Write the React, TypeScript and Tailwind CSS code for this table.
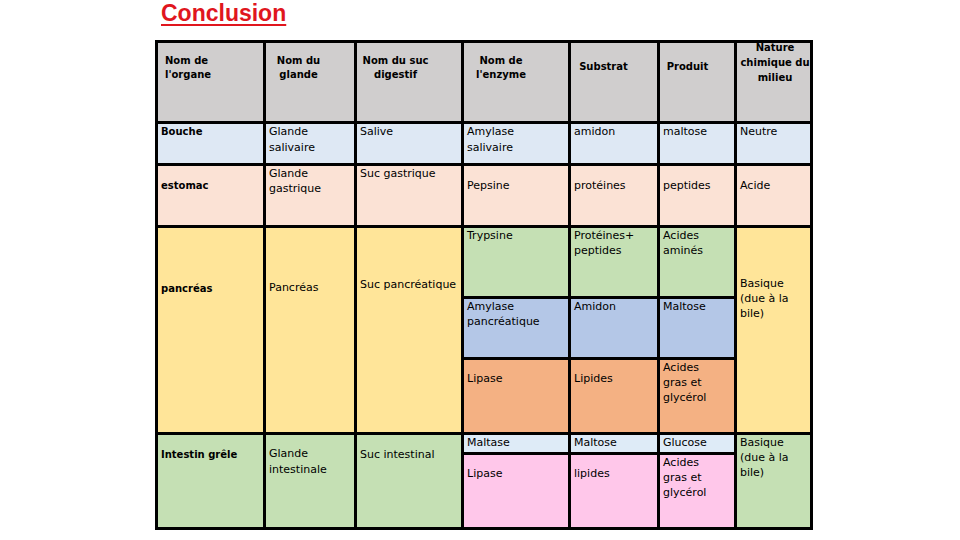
import React from "react";

const C: React.FC<{ bg: string; className?: string; children?: React.ReactNode }> = ({ bg, className = "", children }) => (
  <div className={`${bg} ${className}`}>{children}</div>
);

export default function App() {
  const H = "bg-[#d0cece] font-bold text-[10px] leading-[14px] text-black";
  const B = "text-[11px] leading-[15px] text-black pl-[3px]";
  const O = "font-bold text-[10px] leading-[15px] text-black pl-[3px]";
  return (
    <div className="w-[960px] h-[540px] bg-white overflow-hidden">
      <div className="pl-[161px]">
        <div className="font-['Liberation_Sans',Arial,sans-serif] font-bold text-[23px] leading-[26px] text-[#e0161e] underline decoration-2 underline-offset-[3px]">
          Conclusion
        </div>
      </div>
      <div className="ml-[155px] mt-[14px] w-fit font-['DejaVu_Sans',sans-serif]">
        <div className="grid grid-cols-[105px_88px_104px_104px_86px_74px_73px] grid-rows-[78px_39px_59px_68px_58px_72px_17px_72px] gap-[3px] p-[3px] bg-black">
          {/* header */}
          <C bg="" className={`${H} pl-[7px] pt-[11px]`}>Nom de<br />l'organe</C>
          <C bg="" className={`${H} text-center pr-[23px] pt-[11px]`}>Nom du<br />glande</C>
          <C bg="" className={`${H} text-center pr-[27px] pt-[11px] whitespace-nowrap`}>Nom du suc<br />digestif</C>
          <C bg="" className={`${H} text-center pr-[30px] pt-[11px]`}>Nom de<br />l'enzyme</C>
          <C bg="" className={`${H} text-center pr-[21px] pt-[17px]`}>Substrat</C>
          <C bg="" className={`${H} text-center pr-[19px] pt-[17px]`}>Produit</C>
          <C bg="" className={`${H} text-center pl-[3px] whitespace-nowrap`}>
            <div className="-mt-[3px] leading-[15px]">Nature<br />chimique du<br />milieu</div>
          </C>

          {/* Bouche */}
          <C bg="bg-[#dee8f4]" className={O}>Bouche</C>
          <C bg="bg-[#dee8f4]" className={`${B} leading-[16px]`}>Glande<br />salivaire</C>
          <C bg="bg-[#dee8f4]" className={B}>Salive</C>
          <C bg="bg-[#dee8f4]" className={`${B} leading-[16px]`}>Amylase<br />salivaire</C>
          <C bg="bg-[#dee8f4]" className={B}>amidon</C>
          <C bg="bg-[#dee8f4]" className={B}>maltose</C>
          <C bg="bg-[#dee8f4]" className={B}>Neutre</C>

          {/* estomac */}
          <C bg="bg-[#fbe2d5]" className={`${O} pt-[12px]`}>estomac</C>
          <C bg="bg-[#fbe2d5]" className={B}>Glande<br />gastrique</C>
          <C bg="bg-[#fbe2d5]" className={B}>Suc gastrique</C>
          <C bg="bg-[#fbe2d5]" className={`${B} pt-[12px]`}>Pepsine</C>
          <C bg="bg-[#fbe2d5]" className={`${B} pt-[12px]`}>protéines</C>
          <C bg="bg-[#fbe2d5]" className={`${B} pt-[12px]`}>peptides</C>
          <C bg="bg-[#fbe2d5]" className={`${B} pt-[12px]`}>Acide</C>

          {/* pancréas */}
          <C bg="bg-[#ffe599]" className={`${O} row-span-3 pt-[53px]`}>pancréas</C>
          <C bg="bg-[#ffe599]" className={`${B} row-span-3 pt-[52px]`}>Pancréas</C>
          <C bg="bg-[#ffe599]" className={`${B} row-span-3 pt-[49px] whitespace-nowrap`}>Suc pancréatique</C>
          <C bg="bg-[#c5e0b4]" className={B}>Trypsine</C>
          <C bg="bg-[#c5e0b4]" className={`${B} leading-[14px]`}>Protéines+<br />peptides</C>
          <C bg="bg-[#c5e0b4]" className={`${B} leading-[14px]`}>Acides<br />aminés</C>
          <C bg="bg-[#ffe599]" className={`${B} row-span-3 pt-[48px] leading-[14px]`}>Basique<br />(due à la<br />bile)</C>
          <C bg="bg-[#b4c7e7]" className={`${B} leading-[14px]`}>Amylase<br />pancréatique</C>
          <C bg="bg-[#b4c7e7]" className={B}>Amidon</C>
          <C bg="bg-[#b4c7e7]" className={B}>Maltose</C>
          <C bg="bg-[#f4b183]" className={`${B} pt-[11px]`}>Lipase</C>
          <C bg="bg-[#f4b183]" className={`${B} pt-[11px]`}>Lipides</C>
          <C bg="bg-[#f4b183]" className={B}>Acides<br />gras et<br />glycérol</C>

          {/* Intestin grêle */}
          <C bg="bg-[#c5e0b4]" className={`${O} row-span-2 pt-[12px] whitespace-nowrap`}>Intestin grêle</C>
          <C bg="bg-[#c5e0b4]" className={`${B} row-span-2 pt-[11px] leading-[16px]`}>Glande<br />intestinale</C>
          <C bg="bg-[#c5e0b4]" className={`${B} row-span-2 pt-[12px]`}>Suc intestinal</C>
          <C bg="bg-[#deebf7]" className={B}>Maltase</C>
          <C bg="bg-[#deebf7]" className={B}>Maltose</C>
          <C bg="bg-[#deebf7]" className={B}>Glucose</C>
          <C bg="bg-[#c5e0b4]" className={`${B} row-span-2 leading-[14px]`}>Basique<br />(due à la<br />bile)</C>
          <C bg="bg-[#ffc7ea]" className={`${B} pt-[11px]`}>Lipase</C>
          <C bg="bg-[#ffc7ea]" className={`${B} pt-[11px]`}>lipides</C>
          <C bg="bg-[#ffc7ea]" className={B}>Acides<br />gras et<br />glycérol</C>
        </div>
      </div>
    </div>
  );
}
